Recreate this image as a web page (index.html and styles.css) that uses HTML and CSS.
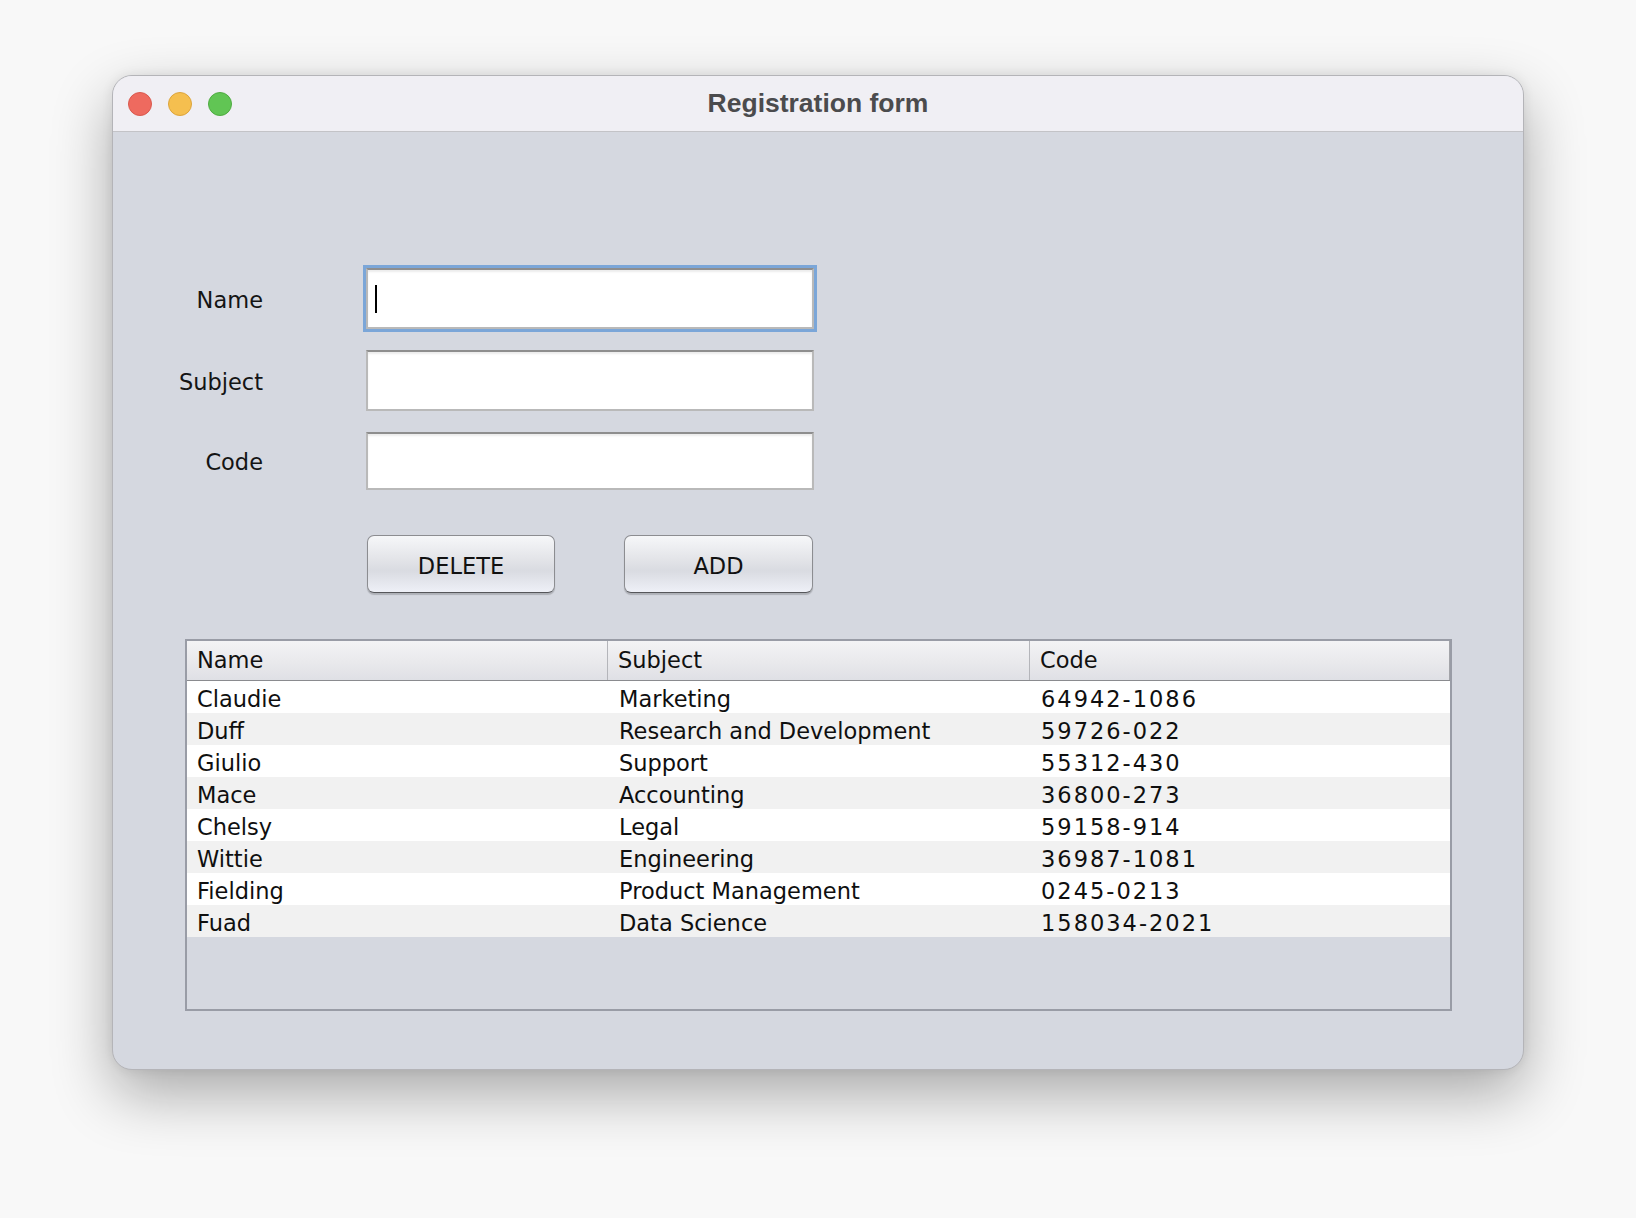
FILE: index.html
```html
<!DOCTYPE html>
<html lang="en">
<head>
<meta charset="utf-8">
<title>Registration form</title>
<link rel="stylesheet" href="styles.css">
</head>
<body>
<div class="window">
  <div class="titlebar">
    <div class="lights">
      <span class="light red"></span>
      <span class="light yellow"></span>
      <span class="light green"></span>
    </div>
    <div class="title">Registration form</div>
    <div></div>
  </div>
  <div class="content">
    <div class="form">
      <label class="label">Name</label>
      <div class="field focused"><span class="caret"></span></div>
      <label class="label">Subject</label>
      <div class="field"></div>
      <label class="label">Code</label>
      <div class="field short"></div>
    </div>
    <div class="buttons">
      <button class="btn delete">DELETE</button>
      <button class="btn add">ADD</button>
    </div>
    <div class="table">
      <div class="thead">
        <div class="th">Name</div>
        <div class="th">Subject</div>
        <div class="th last">Code</div>
      </div>
      <div class="tbody">
        <div class="tr"><div class="td">Claudie</div><div class="td">Marketing</div><div class="td code">64942-1086</div></div>
        <div class="tr"><div class="td">Duff</div><div class="td">Research and Development</div><div class="td code">59726-022</div></div>
        <div class="tr"><div class="td">Giulio</div><div class="td">Support</div><div class="td code">55312-430</div></div>
        <div class="tr"><div class="td">Mace</div><div class="td">Accounting</div><div class="td code">36800-273</div></div>
        <div class="tr"><div class="td">Chelsy</div><div class="td">Legal</div><div class="td code">59158-914</div></div>
        <div class="tr"><div class="td">Wittie</div><div class="td">Engineering</div><div class="td code">36987-1081</div></div>
        <div class="tr"><div class="td">Fielding</div><div class="td">Product Management</div><div class="td code">0245-0213</div></div>
        <div class="tr"><div class="td">Fuad</div><div class="td">Data Science</div><div class="td code">158034-2021</div></div>
      </div>
    </div>
  </div>
</div>
</body>
</html>
```

FILE: styles.css
```css
* { box-sizing: border-box; }

html, body {
  margin: 0;
  padding: 0;
}

body {
  background: #f8f8f8;
  width: 1636px;
  height: 1218px;
  padding: 75px 0 0 112px;
  font-family: "DejaVu Sans", "Liberation Sans", sans-serif;
  color: #111;
}

.window {
  width: 1412px;
  height: 995px;
  border: 1px solid #b4b4b8;
  border-radius: 20px;
  background: #d5d8e0;
  overflow: hidden;
  box-shadow: 0 24px 60px rgba(0, 0, 0, 0.32), 0 0 12px rgba(0, 0, 0, 0.08);
}

.titlebar {
  height: 56px;
  background: #f0eff4;
  border-bottom: 1px solid #c3c3c7;
  display: grid;
  grid-template-columns: 1fr auto 1fr;
  align-items: center;
}

.lights {
  display: flex;
  gap: 16px;
  padding-left: 15px;
}

.light {
  width: 24px;
  height: 24px;
  border-radius: 50%;
  display: block;
}
.red { background: #ee6a5f; border: 1px solid #d9594e; }
.yellow { background: #f5bf4f; border: 1px solid #dca43c; }
.green { background: #61c554; border: 1px solid #4fab41; }

.title {
  font-family: "Liberation Sans", Arial, sans-serif;
  font-weight: bold;
  font-size: 26.5px;
  color: #4b4b4d;
  margin-top: 0;
}

.content {
  padding-top: 136px;
}

.form {
  display: grid;
  grid-template-columns: 150px 448px;
  column-gap: 103px;
  row-gap: 21px;
  align-items: center;
}

.label {
  text-align: right;
  font-size: 22.5px;
  color: #141414;
  padding-top: 2px;
}

.field {
  height: 61px;
  background: #fff;
  border: 2px solid #b9b9b9;
  border-top-color: #8e8e8e;
  box-shadow: inset 0 2px 2px rgba(0, 0, 0, 0.08);
  position: relative;
}
.field.short { height: 58px; }

.field.focused {
  box-shadow: inset 0 2px 2px rgba(0, 0, 0, 0.08), 0 0 0 3px #7ba6d8;
}

.caret {
  position: absolute;
  left: 7px;
  top: 15px;
  width: 2px;
  height: 28px;
  background: #000;
}

.buttons {
  display: flex;
  gap: 69px;
  margin: 45px 0 0 254px;
}

.btn {
  height: 58px;
  width: 188px;
  font-family: "DejaVu Sans", "Liberation Sans", sans-serif;
  font-size: 22.5px;
  color: #111;
  border: 1.5px solid #8c8d91;
  border-bottom-color: #55565a;
  border-radius: 7px;
  background: linear-gradient(#f6f7f9 0%, #e4e5e9 40%, #d9dbe1 62%, #eef0f7 100%);
  box-shadow: 0 2px 1px rgba(0, 0, 0, 0.18);
  padding: 3px 0 0;
}
.btn.add { width: 189px; }

.table {
  margin: 46px 0 0 72px;
  width: 1267px;
  height: 372px;
  border: 2px solid #999ca6;
  background: #d5d8e0;
}

.thead {
  display: grid;
  grid-template-columns: 421px 422px 420px;
  height: 40px;
  border-bottom: 1.5px solid #8a8b8f;
  background: linear-gradient(#f3f3f5 0%, #e9e9ec 55%, #dfe0e5 100%);
}

.th {
  font-size: 22.5px;
  padding-left: 10px;
  line-height: 38px;
  border-right: 1px solid #b4b5ba;
  color: #111;
}
.th.last { border-right: 1px solid #a3a4a9; }

.tr {
  display: grid;
  grid-template-columns: 421px 422px 420px;
  height: 32px;
  background: #fff;
}
.tr:nth-child(even) { background: #f1f1f1; }

.td {
  font-size: 22.5px;
  padding-top: 5px;
  line-height: 27px;
  padding-left: 11px;
  white-space: nowrap;
  color: #0f0f0f;
}
.td:first-child { padding-left: 10px; }

.code { letter-spacing: 2px; }
```
